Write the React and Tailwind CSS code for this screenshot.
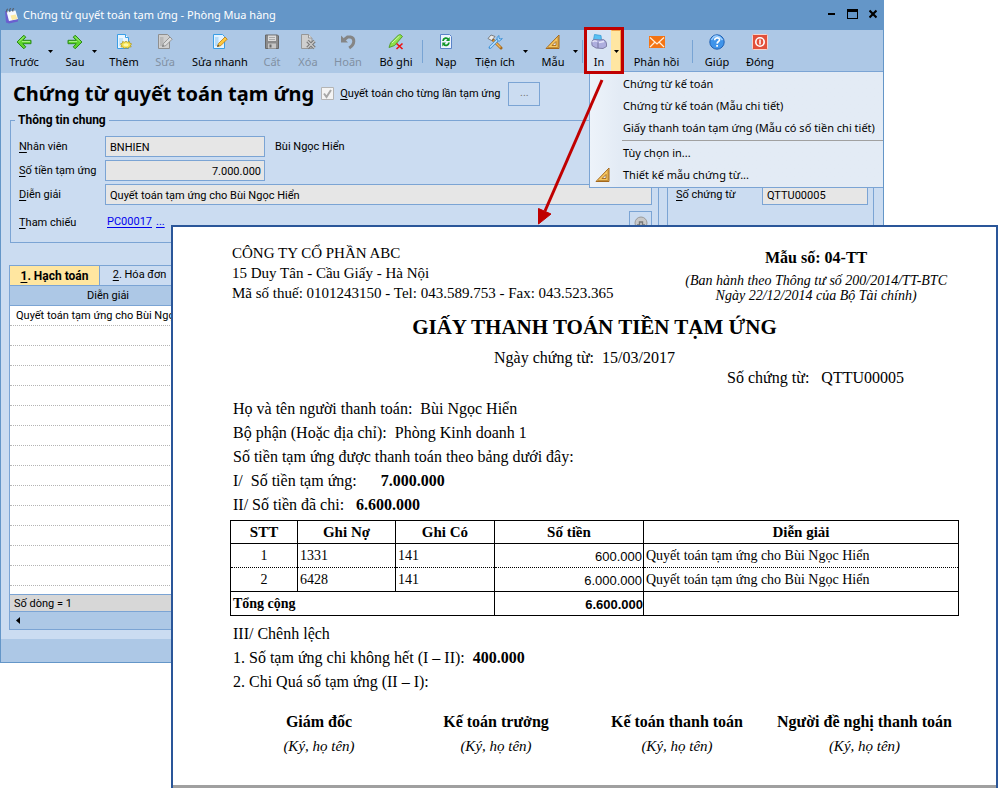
import React from 'react';

const BackIcon = () => (
  <svg viewBox="0 0 16 16" className="h-4 w-4">
    <path d="M7.800 1.200 1 8l6.800 6.800 2-2-3-3.100H15V6.300H6.800l3-3.100z" fill="#5fd42c" stroke="#2b8a1c" strokeWidth="1" strokeLinejoin="round" />
    <path d="M2.800 7.800 7.800 2.800M6 7.500h8" stroke="#b8f59a" strokeWidth="0.800" fill="none" />
  </svg>
);

const NextIcon = () => (
  <svg viewBox="0 0 16 16" className="h-4 w-4">
    <path d="M8.200 1.200 15 8l-6.800 6.800-2-2 3-3.100H1V6.300h8.200l-3-3.100z" fill="#5fd42c" stroke="#2b8a1c" strokeWidth="1" strokeLinejoin="round" />
    <path d="M13.200 7.800 8.200 2.800M10 7.500H2" stroke="#b8f59a" strokeWidth="0.800" fill="none" />
  </svg>
);

const AddIcon = () => (
  <svg viewBox="0 0 16 16" className="h-4 w-4">
    <path d="M1.500.5h8l3 3v11h-11z" fill="#eaf6ff" stroke="#3a9ee6" />
    <path d="M9.500.5v3h3" fill="#fff" stroke="#3a9ee6" />
    <path d="M3 4h4v8H3z" fill="#c4e5fb" />
    <path d="m10 7.200 1.500 1 2-.7.2 1.600 2 .9-1.300 1.200.8 1.700-2.200.1-.9 1.500-2.100-.9-2 .9-.9-1.500-2.200-.1.8-1.700-1.300-1.200 2-.9.2-1.600 2 .7z" fill="#f4e04a" stroke="#a8901c" strokeWidth="0.700" />
    <ellipse cx="10" cy="10.800" rx="2.600" ry="1.600" fill="#fdf7a8" />
  </svg>
);

const EditIcon = ({ muted }) => (
  <svg viewBox="0 0 16 16" className="h-4 w-4">
    <path d="M1.500.5h9l2 2v12h-11z" fill={muted ? '#cfcfcf' : '#e4f3ff'} stroke={muted ? '#8f8f8f' : '#3a9ee6'} />
    <path d="M3 3h3.500v9H3z" fill={muted ? '#b9b9b9' : '#b5dcfa'} />
    <path d="m5.500 12.500 1-3 6.500-6.500 2.200 2.200-6.500 6.500z" fill={muted ? '#dcdcdc' : '#ffc83c'} stroke={muted ? '#858585' : '#b87a14'} strokeWidth="0.800" />
    <path d="m5.200 12.800.7-2 1.300 1.300z" fill={muted ? '#777' : '#333'} />
  </svg>
);

const SaveIcon = () => (
  <svg viewBox="0 0 16 16" className="h-4 w-4">
    <path d="M1.500 1h12l1 1v12.500h-13z" fill="#8b8b8b" stroke="#686868" />
    <path d="M4 1.500h8V7H4z" fill="#dcdcdc" />
    <path d="M5 3.500h6M5 5.500h6" stroke="#aaa" />
    <path d="M4 9.500h8v5H4z" fill="#c6c6c6" />
    <path d="M5.500 10.500h2v3h-2z" fill="#696969" />
  </svg>
);

const DeleteIcon = () => (
  <svg viewBox="0 0 16 16" className="h-4 w-4">
    <path d="M1.500.5h7l3.500 3.500v10.500H1.500z" fill="#cfcfcf" stroke="#979797" />
    <path d="M8.500.5V4H12" fill="#e6e6e6" stroke="#979797" />
    <path d="m7.500 7 7 7M14.500 7l-7 7" stroke="#777" strokeWidth="3.400" />
    <path d="m7.500 7 7 7M14.500 7l-7 7" stroke="#c9c9c9" strokeWidth="1.400" />
  </svg>
);

const UndoIcon = () => (
  <svg viewBox="0 0 16 16" className="h-4 w-4">
    <path d="M4.500 5.500 7.500 3h3c4.500.8 4.700 7-1.300 11" fill="none" stroke="#858585" strokeWidth="3" />
    <path d="M1 8.500V1.500l7 7z" fill="#858585" />
  </svg>
);

const UnpostIcon = () => (
  <svg viewBox="0 0 16 16" className="h-4 w-4">
    <path d="M1 13.500 2.500 9 10.500 1q2-1.300 4 1.500L6.500 11.500z" fill="#8ee04a" stroke="#4c9a20" strokeWidth="0.900" />
    <path d="m4 9 7.500-7" stroke="#d6fab4" strokeWidth="1" />
    <path d="m8.500 9.500 6 5.500m0-5.500-6 5.500" stroke="#ee1111" strokeWidth="1.600" />
  </svg>
);

const ReloadIcon = () => (
  <svg viewBox="0 0 16 16" className="h-4 w-4">
    <path d="M2.500.5h9l2 2v12h-11z" fill="#eef4ff" stroke="#5b84c8" />
    <path d="M5 7c.3-3 4-4 5.300-1.500M11 8.500c-.3 3-4 4-5.300 1.500" fill="none" stroke="#12962a" strokeWidth="1.800" />
    <path d="M11.700 3v4H8zM4.300 12.500v-4H8z" fill="#12962a" />
  </svg>
);

const ToolsIcon = () => (
  <svg viewBox="0 0 16 16" className="h-4 w-4">
    <path d="m6 6 8 8" stroke="#a66a1c" strokeWidth="3" strokeLinecap="round" />
    <path d="m6.500 6.500 7 7" stroke="#f4b85c" strokeWidth="1.400" />
    <path d="m1 4.500 3-3.500 4 1.500-3.500 4z" fill="#ececec" stroke="#666" strokeWidth="0.800" />
    <path d="m3 13.500 8-8" stroke="#3b8fd6" strokeWidth="2.800" strokeLinecap="round" />
    <path d="m3 13.500 8-8" stroke="#c9e8ff" strokeWidth="1.200" />
    <path d="M12 1.500Q8.800 3 10.300 6t5-1.500L13 5l-1-1z" fill="#a5d6fa" stroke="#3b8fd6" strokeWidth="0.900" />
  </svg>
);

const RulerIcon = () => (
  <svg viewBox="0 0 16 16" className="h-4 w-4">
    <path d="M14 1v13.500H1z" fill="#f8c860" stroke="#a4681c" strokeLinejoin="round" />
    <path d="M11 7.500v4H7z" fill="#e2ebf6" stroke="#a4681c" strokeWidth="0.900" />
    <path d="M3.500 13.500h9M13 12.500v-9" stroke="#8a5514" strokeWidth="1" strokeDasharray="1 1" />
  </svg>
);

const PrinterIcon = () => (
  <svg viewBox="0 0 16 16" className="h-4 w-4">
    <path d="m2.500 6 1-5.500 6.500 1 .5 5z" fill="#58c0f4" stroke="#389ad4" strokeWidth="0.800" />
    <path d="M.8 8.500Q1 5.500 4 5.500l5 .5 3.500-.5q3 1.500 3 4.500v2.500L12 14.500l-7-.5-4-2.500z" fill="#aeaede" stroke="#77779f" strokeWidth="0.900" />
    <path d="M1.500 8q2-2 4.500-.5M8 8.500l5-1" fill="none" stroke="#e6e6fa" strokeWidth="1.400" />
    <path d="M7 8.500v5.500" fill="none" stroke="#77779f" />
  </svg>
);

const MailIcon = () => (
  <svg viewBox="0 0 16 16" className="h-4 w-4">
    <path d="M0 2h16v12H0z" fill="#f47414" />
    <path d="m1 3.500 7 6.500 7-6.500M1 13l5-5M15 13l-5-5" fill="none" stroke="#fff0dc" strokeWidth="1.200" />
  </svg>
);

const HelpIcon = () => (
  <svg viewBox="0 0 16 16" className="h-4 w-4">
    <circle cx="8" cy="8" r="7.200" fill="#3f94ea" stroke="#2262b4" />
    <path d="M2.500 6Q5 1.500 8 2t5.500 4" fill="none" stroke="#9fd0ff" strokeWidth="1.400" />
    <path d="M5.700 6.200c0-3.200 5-2.900 4.800-.2C10.400 7.500 8.200 7.500 8.100 9.600" fill="none" stroke="#fff" strokeWidth="1.700" />
    <path d="M7.200 11h1.800v1.800H7.200z" fill="#fff" />
  </svg>
);

const PowerIcon = () => (
  <svg viewBox="0 0 16 16" className="h-4 w-4">
    <rect x="0.500" y="0.500" width="15" height="15" rx="1" fill="#e2503a" stroke="#f7d4cc" />
    <circle cx="8" cy="8" r="4.200" fill="none" stroke="#fff" strokeWidth="1.600" />
    <path d="M8 5.500v5" stroke="#fff" strokeWidth="1.500" />
  </svg>
);

const AppIcon = () => (
  <svg viewBox="0 0 16 16" className="h-4 w-4">
    <path d="M2 3h2l2 9.500 9-1.500v2.500L6 15.500l-3-1z" fill="#6a5fcf" />
    <path d="m3.500 3.500 9-1 2.500 8.500-9 2z" fill="#f5f9ff" />
    <path d="m7.500 7.500 5-1 2 4.500-5.500 1z" fill="#fbe9a0" />
    <path d="M4 4.500q-1-3 1-3.500M7 4q-1-3 1-3.500M10 3.500q-1-2.500 1-3" fill="none" stroke="#59616e" strokeWidth="1.200" />
  </svg>
);

const DropArrow = ({ label }) => (
  <button type="button" aria-label={label} className="flex w-2 items-center justify-center">
    <svg viewBox="0 0 5 3" className="h-[3px] w-[5px]">
      <path d="M0 0h5L2.500 3z" fill="#000" />
    </svg>
  </button>
);

const ToolButton = ({ icon, label, width, disabled }) => (
  <button type="button" disabled={disabled} className={`flex h-full shrink-0 flex-col items-center pt-1 ${width} ${disabled ? 'text-[#8190a3]' : 'text-black'}`}>
    {icon}
    <span className="mt-1 whitespace-nowrap leading-4">{label}</span>
  </button>
);

const Divider = () => <span className="mt-[10px] h-[23px] w-px shrink-0 self-start bg-[#78a4d4]" />;

const Toolbar = () => (
  <div className="flex h-[43px] items-stretch bg-[#adc8e6] pl-px font-['Noto_Sans','Open_Sans',sans-serif] text-[11px]">
    <ToolButton icon={<BackIcon />} label="Trước" width="w-11" />
    <DropArrow label="Trước" />
    <span className="w-[6px]" />
    <ToolButton icon={<NextIcon />} label="Sau" width="w-[30px]" />
    <DropArrow label="Sau" />
    <span className="w-[6px]" />
    <ToolButton icon={<AddIcon />} label="Thêm" width="w-10" />
    <ToolButton icon={<EditIcon muted />} label="Sửa" width="w-[42px]" disabled />
    <ToolButton icon={<EditIcon />} label="Sửa nhanh" width="w-[68px]" />
    <ToolButton icon={<SaveIcon />} label="Cất" width="w-9" disabled />
    <ToolButton icon={<DeleteIcon />} label="Xóa" width="w-9" disabled />
    <ToolButton icon={<UndoIcon />} label="Hoãn" width="w-11" disabled />
    <ToolButton icon={<UnpostIcon />} label="Bỏ ghi" width="w-[52px]" />
    <Divider />
    <ToolButton icon={<ReloadIcon />} label="Nạp" width="w-[46px]" />
    <ToolButton icon={<ToolsIcon />} label="Tiện ích" width="w-[52px]" />
    <DropArrow label="Tiện ích" />
    <span className="w-[6px]" />
    <ToolButton icon={<RulerIcon />} label="Mẫu" width="w-9" />
    <DropArrow label="Mẫu" />
    <span className="w-[3px]" />
    <Divider />
    {/* print split button, marked with the red frame */}
    <div className="relative z-20 ml-1 flex">
      <div className="flex bg-[#d8e4f4]">
        <ToolButton icon={<PrinterIcon />} label="In" width="w-6" />
      </div>
      <div className="flex border border-[#f2a24a] border-l-[#ffe6a2] bg-[#ffe6a2]">
        <DropArrow label="In" />
      </div>
      <span className="pointer-events-none absolute -inset-x-[3px] -bottom-px -top-[3px] border-3 border-[#c00000]" />
    </div>
    <ToolButton icon={<MailIcon />} label="Phản hồi" width="w-[71px]" />
    <Divider />
    <ToolButton icon={<HelpIcon />} label="Giúp" width="w-12" />
    <ToolButton icon={<PowerIcon />} label="Đóng" width="w-[38px]" />
  </div>
);

const TitleBar = () => (
  <div className="flex h-[29px] items-center bg-[#6496c8] pl-[2px] pr-[6px] text-white">
    <AppIcon />
    <h1 className="ml-1 grow font-['Noto_Sans','Open_Sans',sans-serif] text-[11px]">Chứng từ quyết toán tạm ứng - Phòng Mua hàng</h1>
    <div className="flex items-center gap-[11px] pb-1">
      <button type="button" aria-label="Minimize">
        <svg viewBox="0 0 8 12" className="h-3 w-2"><path d="M0 5h7v2H0z" /></svg>
      </button>
      <button type="button" aria-label="Maximize">
        <svg viewBox="0 0 11 12" className="h-3 w-[11px]"><path d="M0 1h11v10H0zM1 4v6h9V4z" fillRule="evenodd" /></svg>
      </button>
      <button type="button" aria-label="Close">
        <svg viewBox="0 0 8 12" className="h-3 w-2"><path d="m.5 2.500 7 7m0-7-7 7" stroke="#000" strokeWidth="2.200" /></svg>
      </button>
    </div>
  </div>
);

const menuItems = [
  { label: 'Chứng từ kế toán' },
  { label: 'Chứng từ kế toán (Mẫu chi tiết)' },
  { label: 'Giấy thanh toán tạm ứng (Mẫu có số tiền chi tiết)' },
  { label: 'Tùy chọn in...', separated: true },
  { label: 'Thiết kế mẫu chứng từ...', icon: <RulerIcon /> }
];

const PrintMenu = () => (
  <ul className="absolute left-[588px] right-0 top-[70px] z-10 border border-r-0 border-[#7ba4d4] bg-[#e3ebf5] bg-linear-to-r from-[#edf3fa] to-[#e3ebf5] to-10% pb-px pt-px font-['Noto_Sans','Open_Sans',sans-serif] text-[11px]">
    {menuItems.map((item) => (
      <li key={item.label}>
        {item.separated && <hr className="mb-px ml-8 mt-px border-[#a0a0a0]" />}
        <button type="button" className="flex h-[22px] w-full items-center whitespace-nowrap">
          <span className="flex w-[33px] shrink-0 justify-center pr-2">{item.icon}</span>
          {item.label}
        </button>
      </li>
    ))}
  </ul>
);

const Caption = ({ text, htmlFor, className = '' }) => (
  <label htmlFor={htmlFor} className={`shrink-0 whitespace-nowrap pt-[2px] ${className}`}>
    <span className="underline underline-offset-2">{text[0]}</span>
    {text.slice(1)}
  </label>
);

const inputClass = 'h-[21px] border border-[#7ba4d4] bg-[#e6e6e6] pt-px text-[11px] text-black outline-none';

const VoucherForm = () => (
  <>
    <div className="flex h-[39px] items-center pl-3 pt-[2px]">
      <h2 className="whitespace-nowrap font-['Noto_Sans','Open_Sans',sans-serif] text-xl font-bold">Chứng từ quyết toán tạm ứng</h2>
      <input id="each" type="checkbox" defaultChecked disabled className="peer sr-only" />
      <svg viewBox="0 0 13 13" className="ml-[7px] h-[13px] w-[13px] shrink-0">
        <path d="M.5.5h12v12H.5z" fill="#f4f4f4" stroke="#b4b4b4" />
        <path d="m3 6.500 2.500 3.500L10 3" fill="none" stroke="#a8a8a8" strokeWidth="2" />
      </svg>
      <Caption htmlFor="each" text="Quyết toán cho từng lần tạm ứng" className="ml-[6px]" />
      <button type="button" className="ml-2 h-6 w-8 border border-[#7ba4d4] text-[#777]">...</button>
    </div>

    <div className="flex gap-2 px-[9px]">
      <fieldset className="min-w-0 grow border border-[#7ba4d4] pb-2 pl-2 pr-[6px]">
        <legend className="-ml-1 px-[3px] text-xs font-bold leading-4">Thông tin chung</legend>
        <div className="flex flex-col gap-[3px] pt-2">
          <div className="flex items-center">
            <Caption htmlFor="employee" text="Nhân viên" className="w-[86px]" />
            <input id="employee" readOnly defaultValue="BNHIEN" className={`w-40 px-1 ${inputClass}`} />
            <span className="ml-[10px] pt-[2px]">Bùi Ngọc Hiển</span>
          </div>
          <div className="flex items-center">
            <Caption htmlFor="amount" text="Số tiền tạm ứng" className="w-[86px]" />
            <input id="amount" readOnly defaultValue="7.000.000" className={`w-40 px-[3px] text-right ${inputClass}`} />
          </div>
          <div className="flex items-center">
            <Caption htmlFor="note" text="Diễn giải" className="w-[86px]" />
            <input id="note" readOnly defaultValue="Quyết toán tạm ứng cho Bùi Ngọc Hiển" className={`min-w-0 grow px-1 ${inputClass}`} />
          </div>
          <div className="mt-[3px] flex items-center">
            <span className="w-[88px] pt-[2px]"><span className="underline underline-offset-2">T</span>ham chiếu</span>
            <a href="#pc00017" className="text-[#0000ee] underline underline-offset-2">PC00017</a>
            <a href="#more" className="ml-1 text-[#0000ee] underline underline-offset-2">...</a>
            <button type="button" aria-label="Tham chiếu" className="ml-auto flex h-[23px] w-[23px] items-center justify-center border border-[#7ba4d4]">
              <svg viewBox="0 0 14 14" className="h-[14px] w-[14px]">
                <circle cx="7" cy="7" r="6" fill="#c8c8c8" stroke="#9a9a9a" />
                <path d="M3 9h2.500V6h3v3H11" fill="none" stroke="#777" strokeWidth="1.400" />
              </svg>
            </button>
          </div>
        </div>
      </fieldset>

      <fieldset className="mt-2 flex w-[207px] shrink-0 border border-[#7ba4d4] pl-2 pr-[5px] pt-[63px]">
        <div className="flex h-[21px] items-center">
          <Caption htmlFor="number" text="Số chứng từ" className="w-[86px]" />
          <input id="number" readOnly defaultValue="QTTU00005" className={`w-[106px] px-1 ${inputClass}`} />
        </div>
      </fieldset>
    </div>
  </>
);

const emptyRows = Array.from({ length: 13 });

const AccountingGrid = () => (
  <div className="mx-2 mt-[22px]">
    <div className="flex">
      <button type="button" className="h-5 w-[91px] border border-b-0 border-[#7ba4d4] bg-[#ffe6a0] text-xs font-bold">
        <span className="underline underline-offset-2">1</span>. Hạch toán
      </button>
      <button type="button" className="h-5 w-20 border border-b-0 border-l-0 border-[#7ba4d4]">
        <span className="underline underline-offset-2">2</span>. Hóa đơn
      </button>
    </div>
    <div className="border border-t-0 border-[#7ba4d4] bg-white">
      <table className="w-full border-collapse">
        <thead>
          <tr className="h-5 bg-[#adc8e6]">
            <th className="border-y border-[#7ba4d4] pl-[77px] pt-px text-left font-normal leading-4">Diễn giải</th>
          </tr>
        </thead>
        <tbody>
          <tr className="h-5 border-b border-dotted border-[#b4b4b4]">
            <td className="pl-[6px] pt-px leading-4">Quyết toán tạm ứng cho Bùi Ngọc Hiển</td>
          </tr>
          {emptyRows.map((_, i) => (
            <tr key={i} className="h-5 border-b border-dotted border-[#b4b4b4]">
              <td />
            </tr>
          ))}
        </tbody>
      </table>
      <div className="mt-2 h-[18px] border-y border-[#7ba4d4] bg-[#d7d7d7] pl-1 pt-px leading-4">Số dòng = 1</div>
      <div className="flex h-[17px] items-center bg-[#adc8e6] pl-[6px]">
        <button type="button" aria-label="Scroll left">
          <svg viewBox="0 0 4 7" className="h-[7px] w-1"><path d="M4 0v7L0 3.500z" /></svg>
        </button>
      </div>
    </div>
  </div>
);

const AppWindow = () => (
  <main className="relative mr-[114px] border border-[#6496c8] bg-[#cbdcf1] font-[Roboto,sans-serif] text-[11px] text-black">
    <TitleBar />
    <Toolbar />
    <PrintMenu />
    <VoucherForm />
    <AccountingGrid />
    <div className="mt-[9px] h-[23px] bg-[#adc8e6]" />
  </main>
);

const entries = [
  { no: 1, debit: '1331', credit: '141', amount: '600.000', note: 'Quyết toán tạm ứng cho Bùi Ngọc Hiển' },
  { no: 2, debit: '6428', credit: '141', amount: '6.000.000', note: 'Quyết toán tạm ứng cho Bùi Ngọc Hiển' }
];

const signers = ['Giám đốc', 'Kế toán trưởng', 'Kế toán thanh toán', 'Người đề nghị thanh toán'];

const PrintedVoucher = () => (
  <article className="absolute bottom-0 left-[171px] right-0 top-[225px] z-20 flex flex-col border-2 border-b-0 border-[#2a5699] bg-white pl-[57px] pr-[37px] pt-4 font-['Liberation_Serif',serif] text-base leading-6 text-black">
    <header className="flex justify-between">
      <div className="pl-[2px] text-[15px] leading-5">
        <p>CÔNG TY CỔ PHẦN ABC</p>
        <p>15 Duy Tân - Cầu Giấy - Hà Nội</p>
        <p>Mã số thuế: 0101243150 - Tel: 043.589.753 - Fax: 043.523.365</p>
      </div>
      <div className="pr-3 pt-[3px] text-center">
        <p className="font-bold">Mẫu số: 04-TT</p>
        <p className="mt-[3px] text-sm italic leading-[15px]">(Ban hành theo Thông tư số 200/2014/TT-BTC<br />Ngày 22/12/2014 của Bộ Tài chính)</p>
      </div>
    </header>
    <h2 className="mt-[10px] text-center text-[21px] font-bold leading-7">GIẤY THANH TOÁN TIỀN TẠM ỨNG</h2>
    <p className="mt-[7px] whitespace-pre pr-5 text-center leading-5">Ngày chứng từ:  15/03/2017</p>
    <p className="flex justify-end gap-3 pr-[55px] leading-5"><span>Số chứng từ:</span><span>QTTU00005</span></p>
    <div className="mt-[9px] whitespace-pre pl-[3px]">
      <p>Họ và tên người thanh toán:  Bùi Ngọc Hiển</p>
      <p>Bộ phận (Hoặc địa chỉ):  Phòng Kinh doanh 1</p>
      <p>Số tiền tạm ứng được thanh toán theo bảng dưới đây:</p>
      <p>I/  Số tiền tạm ứng:      <b>7.000.000</b></p>
      <p>II/ Số tiền đã chi:   <b>6.600.000</b></p>
    </div>
    <table className="mt-[3px] w-full table-fixed border-collapse border border-black text-sm leading-5">
      <colgroup>
        <col className="w-[67px]" />
        <col className="w-[98px]" />
        <col className="w-[99px]" />
        <col className="w-[149px]" />
        <col />
      </colgroup>
      <thead>
        <tr className="h-[23px] border-b border-black text-[15px]">
          {['STT', 'Ghi Nợ', 'Ghi Có', 'Số tiền', 'Diễn giải'].map((name) => (
            <th key={name} className="border-x border-black leading-5">{name}</th>
          ))}
        </tr>
      </thead>
      <tbody>
        {entries.map((entry) => (
          <tr key={entry.no} className="h-6 border-b border-dotted border-black">
            <td className="border-x border-x-black text-center [border-inline-style:solid]">{entry.no}</td>
            <td className="border-x border-x-black pl-[2px] [border-inline-style:solid]">{entry.debit}</td>
            <td className="border-x border-x-black pl-[2px] [border-inline-style:solid]">{entry.credit}</td>
            <td className="border-x border-x-black pr-px pt-[2px] text-right font-['Liberation_Sans',sans-serif] text-[13px] [border-inline-style:solid]">{entry.amount}</td>
            <td className="border-x border-x-black pl-[2px] [border-inline-style:solid]">{entry.note}</td>
          </tr>
        ))}
        <tr className="h-6 border-t border-black font-bold">
          <td colSpan={3} className="border border-black pl-[2px]">Tổng cộng</td>
          <td className="border border-black pt-[2px] text-right font-['Liberation_Sans',sans-serif] text-[13px]">6.600.000</td>
          <td className="border border-black" />
        </tr>
      </tbody>
    </table>
    <div className="mt-[6px] whitespace-pre pl-[3px]">
      <p>III/ Chênh lệch</p>
      <p>1. Số tạm ứng chi không hết (I – II):  <b>400.000</b></p>
      <p>2. Chi Quá số tạm ứng (II – I):</p>
    </div>
    <div className="mt-4 grid grid-cols-[178px_176px_186px_1fr] text-center">
      {signers.map((name) => (
        <div key={name}>
          <p className="whitespace-nowrap font-bold">{name}</p>
          <p className="text-[15px] italic">(Ký, họ tên)</p>
        </div>
      ))}
    </div>
    <div className="-ml-[57px] -mr-[37px] mt-auto h-[3px] bg-[#a0a0a0]" />
  </article>
);

export default function App() {
  return (
    <div className="relative min-h-screen overflow-hidden bg-white">
      <AppWindow />
      <PrintedVoucher />
      {/* arrow leading from the print button to the printed voucher */}
      <svg viewBox="0 0 70 150" className="pointer-events-none absolute left-[536px] top-[77px] z-30 h-[150px] w-[70px]">
        <path d="M66 3 9 134" stroke="#c00000" strokeWidth="3" />
        <path d="M2.500 131.500v15.500L15 137z" fill="#c00000" stroke="#c00000" strokeWidth="1" />
      </svg>
    </div>
  );
}
